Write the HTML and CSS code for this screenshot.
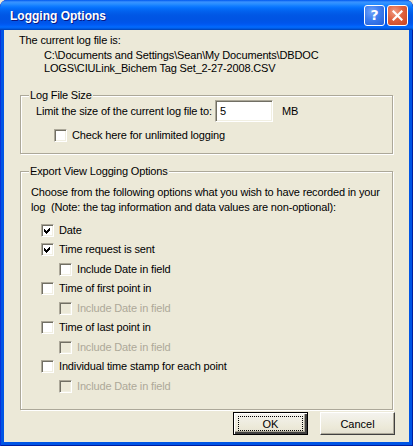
FILE: index.html
```html
<!DOCTYPE html>
<html>
<head>
<meta charset="utf-8">
<title>Logging Options</title>
<link rel="stylesheet" href="styles.css">
</head>
<body>
<div class="window">
  <header class="titlebar">
    <h1 class="title">Logging Options</h1>
    <div class="caption-buttons">
      <span class="cap-btn help">?</span>
      <span class="cap-btn close"><svg width="11" height="11" viewBox="0 0 11 11"><path d="M1.5 1.5 L9.5 9.5 M9.5 1.5 L1.5 9.5" stroke="#fff" stroke-width="2.2" stroke-linecap="square"/></svg></span>
    </div>
  </header>
  <main class="client">
    <p class="static intro">The current log file is:</p>
    <p class="static path">C:\Documents and Settings\Sean\My Documents\DBDOC<br>LOGS\CIULink_Bichem Tag Set_2-27-2008.CSV</p>

    <fieldset class="group size-group">
      <legend>Log File Size</legend>
      <div class="limit-row">
        <span class="limit-label">Limit the size of the current log file to:</span>
        <span class="edit">5</span>
        <span class="unit">MB</span>
      </div>
      <label class="check unlimited"><span class="box"></span>Check here for unlimited logging</label>
    </fieldset>

    <fieldset class="group export-group">
      <legend>Export View Logging Options</legend>
      <p class="static choose">Choose from the following options what you wish to have recorded in your<br>log&nbsp; (Note: the tag information and data values are non-optional):</p>
      <div class="options">
        <label class="check"><span class="box"><svg width="11" height="11" viewBox="0 0 11 11"><path d="M2 4 L4 6 L8 2 L8 5 L4 9 L2 7 Z" fill="#000" shape-rendering="crispEdges"/></svg></span>Date</label>
        <label class="check"><span class="box"><svg width="11" height="11" viewBox="0 0 11 11"><path d="M2 4 L4 6 L8 2 L8 5 L4 9 L2 7 Z" fill="#000" shape-rendering="crispEdges"/></svg></span>Time request is sent</label>
        <label class="check sub"><span class="box"></span>Include Date in field</label>
        <label class="check"><span class="box"></span>Time of first point in</label>
        <label class="check sub disabled"><span class="box"></span>Include Date in field</label>
        <label class="check"><span class="box"></span>Time of last point in</label>
        <label class="check sub disabled"><span class="box"></span>Include Date in field</label>
        <label class="check"><span class="box"></span>Individual time stamp for each point</label>
        <label class="check sub disabled"><span class="box"></span>Include Date in field</label>
      </div>
    </fieldset>

    <div class="buttons">
      <span class="btn default"><span class="focus">OK</span></span>
      <span class="btn">Cancel</span>
    </div>
  </main>
</div>
</body>
</html>
```

FILE: styles.css
```css
* { box-sizing: border-box; }

html, body {
  margin: 0;
  padding: 0;
  background: #ECE9D8;
}

body {
  font-family: "Liberation Sans", Arial, sans-serif;
  font-size: 11px;
  letter-spacing: -0.15px;
  color: #000;
}

.window {
  width: 413px;
  height: 446px;
  display: flex;
  flex-direction: column;
  background: #0055E5;
  border-radius: 7px 7px 0 0;
  box-shadow: inset 1px 0 #0831D9, inset -1px 0 #001EA0, inset 0 -1px #001EA0;
  overflow: hidden;
}

.titlebar {
  height: 30px;
  flex: none;
  display: flex;
  align-items: center;
  justify-content: space-between;
  padding: 0 5px 0 10px;
  border-radius: 7px 7px 0 0;
  background: linear-gradient(to bottom,
    #0058EE 0px, #3A93FF 2px, #288EFF 4px, #127DFF 6px, #0470FC 8px,
    #0262EE 11px, #0057E5 15px, #0054E3 19px, #0055EB 23px, #005BF5 25px,
    #026AFE 27px, #0062EF 28px, #0052D6 29px, #0040AB 30px);
}

.title {
  margin: 0;
  font-family: "Liberation Sans", Arial, sans-serif;
  font-weight: bold;
  font-size: 12px;
  letter-spacing: 0;
  color: #fff;
  text-shadow: 1px 1px #0A1883;
  padding-top: 1px;
}

.caption-buttons {
  display: flex;
  gap: 2px;
}

.cap-btn {
  width: 21px;
  height: 21px;
  border: 1px solid #fff;
  border-radius: 3px;
  display: flex;
  align-items: center;
  justify-content: center;
  color: #fff;
  font-family: "DejaVu Sans", sans-serif;
  font-weight: bold;
  font-size: 14px;
  letter-spacing: 0;
}

.help {
  background: radial-gradient(circle at 35% 30%, #6FA2F8 0%, #3D7DEF 45%, #235FD8 100%);
}

.close {
  background: radial-gradient(circle at 35% 30%, #F09C84 0%, #E0623F 45%, #C9421E 100%);
}

.client {
  flex: 1;
  margin: 0 4px 4px 4px;
  background: #ECE9D8;
  padding: 4px 0 7px 0;
  display: flex;
  flex-direction: column;
}

.static {
  margin: 0;
  line-height: 13px;
}

.intro {
  margin-left: 15px;
}

.path {
  margin-top: 2px;
  margin-left: 40px;
}

.group {
  margin: 0 16px 0 16px;
  padding: 0;
  border: 1px solid #ACA899;
  box-shadow: 1px 1px #fff, inset 1px 1px #fff;
  min-width: 0;
}

.group legend {
  margin-left: 8px;
  padding: 0 1px;
  line-height: 12px;
  background: #ECE9D8;
}

.size-group {
  margin-top: 14px;
  padding-bottom: 11px;
}

.limit-row {
  display: flex;
  align-items: center;
  margin-left: 15px;
  margin-top: -1px;
}

.limit-label {
  width: 179px;
  flex: none;
  white-space: nowrap;
}

.edit {
  width: 58px;
  height: 22px;
  background: #fff;
  border: 1px solid;
  border-color: #ACA899 #fff #fff #ACA899;
  box-shadow: inset 1px 1px #716F64, inset -1px -1px #F1EFE2;
  padding: 3px 0 0 4px;
  line-height: 14px;
}

.unit {
  margin-left: 9px;
}

.check {
  display: flex;
  align-items: center;
  gap: 5px;
  line-height: 13px;
  white-space: nowrap;
}

.box {
  width: 13px;
  height: 13px;
  flex: none;
  background: #fff;
  border: 1px solid;
  border-color: #ACA899 #fff #fff #ACA899;
  box-shadow: inset 1px 1px #716F64, inset -1px -1px #F1EFE2;
  display: flex;
  align-items: center;
  justify-content: center;
}

.unlimited {
  margin-top: 7px;
  margin-left: 33px;
}

.export-group {
  margin-top: 11px;
  padding-top: 8px;
  padding-bottom: 13px;
}

.choose {
  margin-left: 10px;
  line-height: 15px;
}

.options {
  margin-top: 5px;
  display: grid;
  grid-template-rows: 20px 19px 20px 19px 20px 19px 20px 19px 20px;
  align-items: center;
  justify-items: start;
}

.options .check {
  margin-left: 20px;
}

.options .check.sub {
  margin-left: 38px;
}

.check.disabled {
  color: #ACA899;
}

.check.disabled .box {
  background: #ECE9D8;
}

.buttons {
  margin-top: auto;
  margin-right: 14px;
  display: flex;
  justify-content: flex-end;
  gap: 12px;
}

.btn {
  width: 75px;
  height: 23px;
  display: flex;
  align-items: center;
  justify-content: center;
  background: linear-gradient(#F4F3EE, #ECE9D8 70%, #E3E0D1);
  border: 1px solid;
  border-color: #fff #404040 #404040 #fff;
  box-shadow: inset -1px -1px #ACA899;
  font-size: 11px;
  letter-spacing: 0;
}

.btn.default {
  border: 1px solid #000;
  box-shadow: inset 1px 1px #fff, inset -2px -2px #404040, inset -3px -3px #ACA899;
}

.focus {
  width: 65px;
  height: 15px;
  border: 1px dotted #000;
  display: flex;
  align-items: center;
  justify-content: center;
}
```
